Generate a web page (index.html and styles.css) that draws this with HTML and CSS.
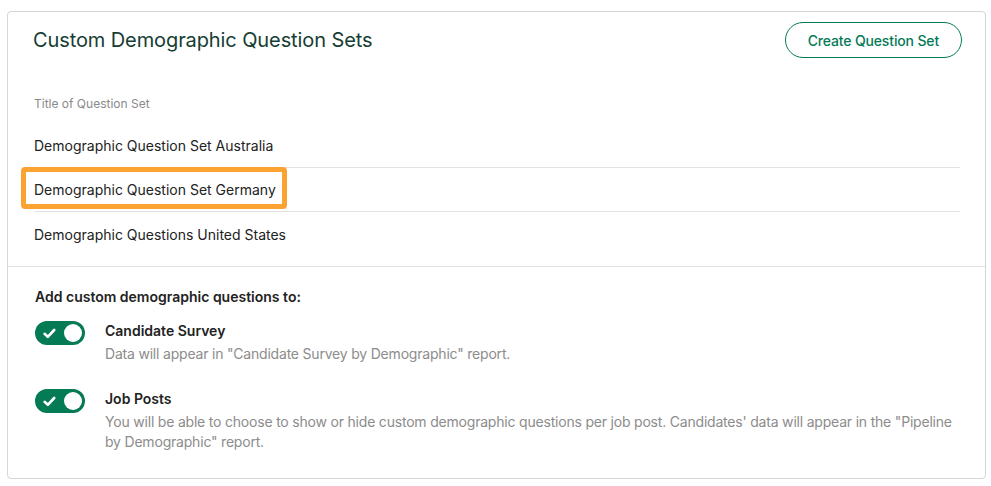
FILE: index.html
```html
<!DOCTYPE html>
<html>
<head>
<meta charset="utf-8">
<link rel="stylesheet" href="styles.css">
</head>
<body>
<div class="card">
  <div class="header">
    <h1 class="title">Custom Demographic Question Sets</h1>
    <button class="btn-outline">Create Question Set</button>
  </div>
  <div class="list">
    <div class="list-label">Title of Question Set</div>
    <div class="row">Demographic Question Set Australia</div>
    <div class="row row-highlight"><span class="highlight-box"></span><span class="row-text">Demographic Question Set Germany</span></div>
    <div class="row">Demographic Questions United States</div>
  </div>
  <div class="settings">
    <div class="settings-title">Add custom demographic questions to:</div>
    <div class="option">
      <span class="toggle">
        <svg class="check" width="13" height="11" viewBox="0 0 13 11"><path d="M1.6 5.8 L4.8 8.8 L11.2 2" fill="none" stroke="#fff" stroke-width="2.6" stroke-linecap="round" stroke-linejoin="round"/></svg>
        <span class="knob"></span>
      </span>
      <div class="option-body">
        <div class="option-title">Candidate Survey</div>
        <div class="option-desc">Data will appear in "Candidate Survey by Demographic" report.</div>
      </div>
    </div>
    <div class="option option-second">
      <span class="toggle">
        <svg class="check" width="13" height="11" viewBox="0 0 13 11"><path d="M1.6 5.8 L4.8 8.8 L11.2 2" fill="none" stroke="#fff" stroke-width="2.6" stroke-linecap="round" stroke-linejoin="round"/></svg>
        <span class="knob"></span>
      </span>
      <div class="option-body">
        <div class="option-title">Job Posts</div>
        <div class="option-desc">You will be able to choose to show or hide custom demographic questions per job post. Candidates' data will appear in the "Pipeline by Demographic" report.</div>
      </div>
    </div>
  </div>
</div>
</body>
</html>
```

FILE: styles.css
```css
* { box-sizing: border-box; }
html, body { margin: 0; padding: 0; background: #fff; }
body {
  font-family: Inter, "Noto Sans", "Liberation Sans", sans-serif;
  color: #222;
  padding: 11px 5px 8px 7px;
}
.card {
  border: 1px solid #d3d7d7;
  border-radius: 4px;
  height: 468px;
  background: #fff;
}
.header {
  display: flex;
  justify-content: space-between;
  align-items: flex-start;
  padding: 10px 23px 0 25px;
}
.title {
  margin: 5px 0 0 0;
  font-size: 20px;
  line-height: 26px;
  font-weight: 400;
  color: #163d33;
  letter-spacing: -0.1px;
}
.btn-outline {
  height: 36px;
  padding: 0 22px;
  border: 1px solid #047a55;
  border-radius: 18px;
  background: #fff;
  color: #047a55;
  font-family: inherit;
  font-size: 14px;
  font-weight: 500;
  letter-spacing: -0.15px;
}
.list {
  padding: 0 25px 10px 26px;
}
.list-label {
  margin-top: 38px;
  margin-bottom: 12px;
  font-size: 12px;
  line-height: 16px;
  color: #8a8a8a;
}
.row {
  height: 44px;
  display: flex;
  align-items: center;
  font-size: 14px;
  color: #222;
  border-bottom: 1px solid #e2e2e2;
}
.row:last-child { border-bottom: none; }
.row-highlight { position: relative; }
.row-text { position: relative; }
.highlight-box {
  position: absolute;
  left: -13px;
  top: -1px;
  width: 266px;
  height: 42px;
  border: 5px solid #fba331;
  border-radius: 4px;
  background: #fff;
}
.settings {
  border-top: 1px solid #e2e2e2;
  padding: 20px 20px 0 27px;
}
.settings-title {
  font-size: 14px;
  font-weight: 600;
  line-height: 20px;
  color: #222;
  margin-bottom: 14px;
}
.option {
  display: flex;
  align-items: flex-start;
  gap: 20px;
}
.option-second { margin-top: 25px; }
.toggle {
  flex: none;
  position: relative;
  width: 50px;
  height: 24px;
  border-radius: 12px;
  background: #047a55;
  display: flex;
  align-items: center;
  justify-content: space-between;
  padding: 0 3px 0 8px;
}
.knob {
  width: 18px;
  height: 18px;
  border-radius: 50%;
  background: #fff;
}
.option-title {
  font-size: 14px;
  font-weight: 600;
  line-height: 20px;
  color: #222;
}
.option-desc {
  margin-top: 3px;
  font-size: 14px;
  line-height: 20px;
  color: #8c8c8c;
  letter-spacing: -0.2px;
}
```
